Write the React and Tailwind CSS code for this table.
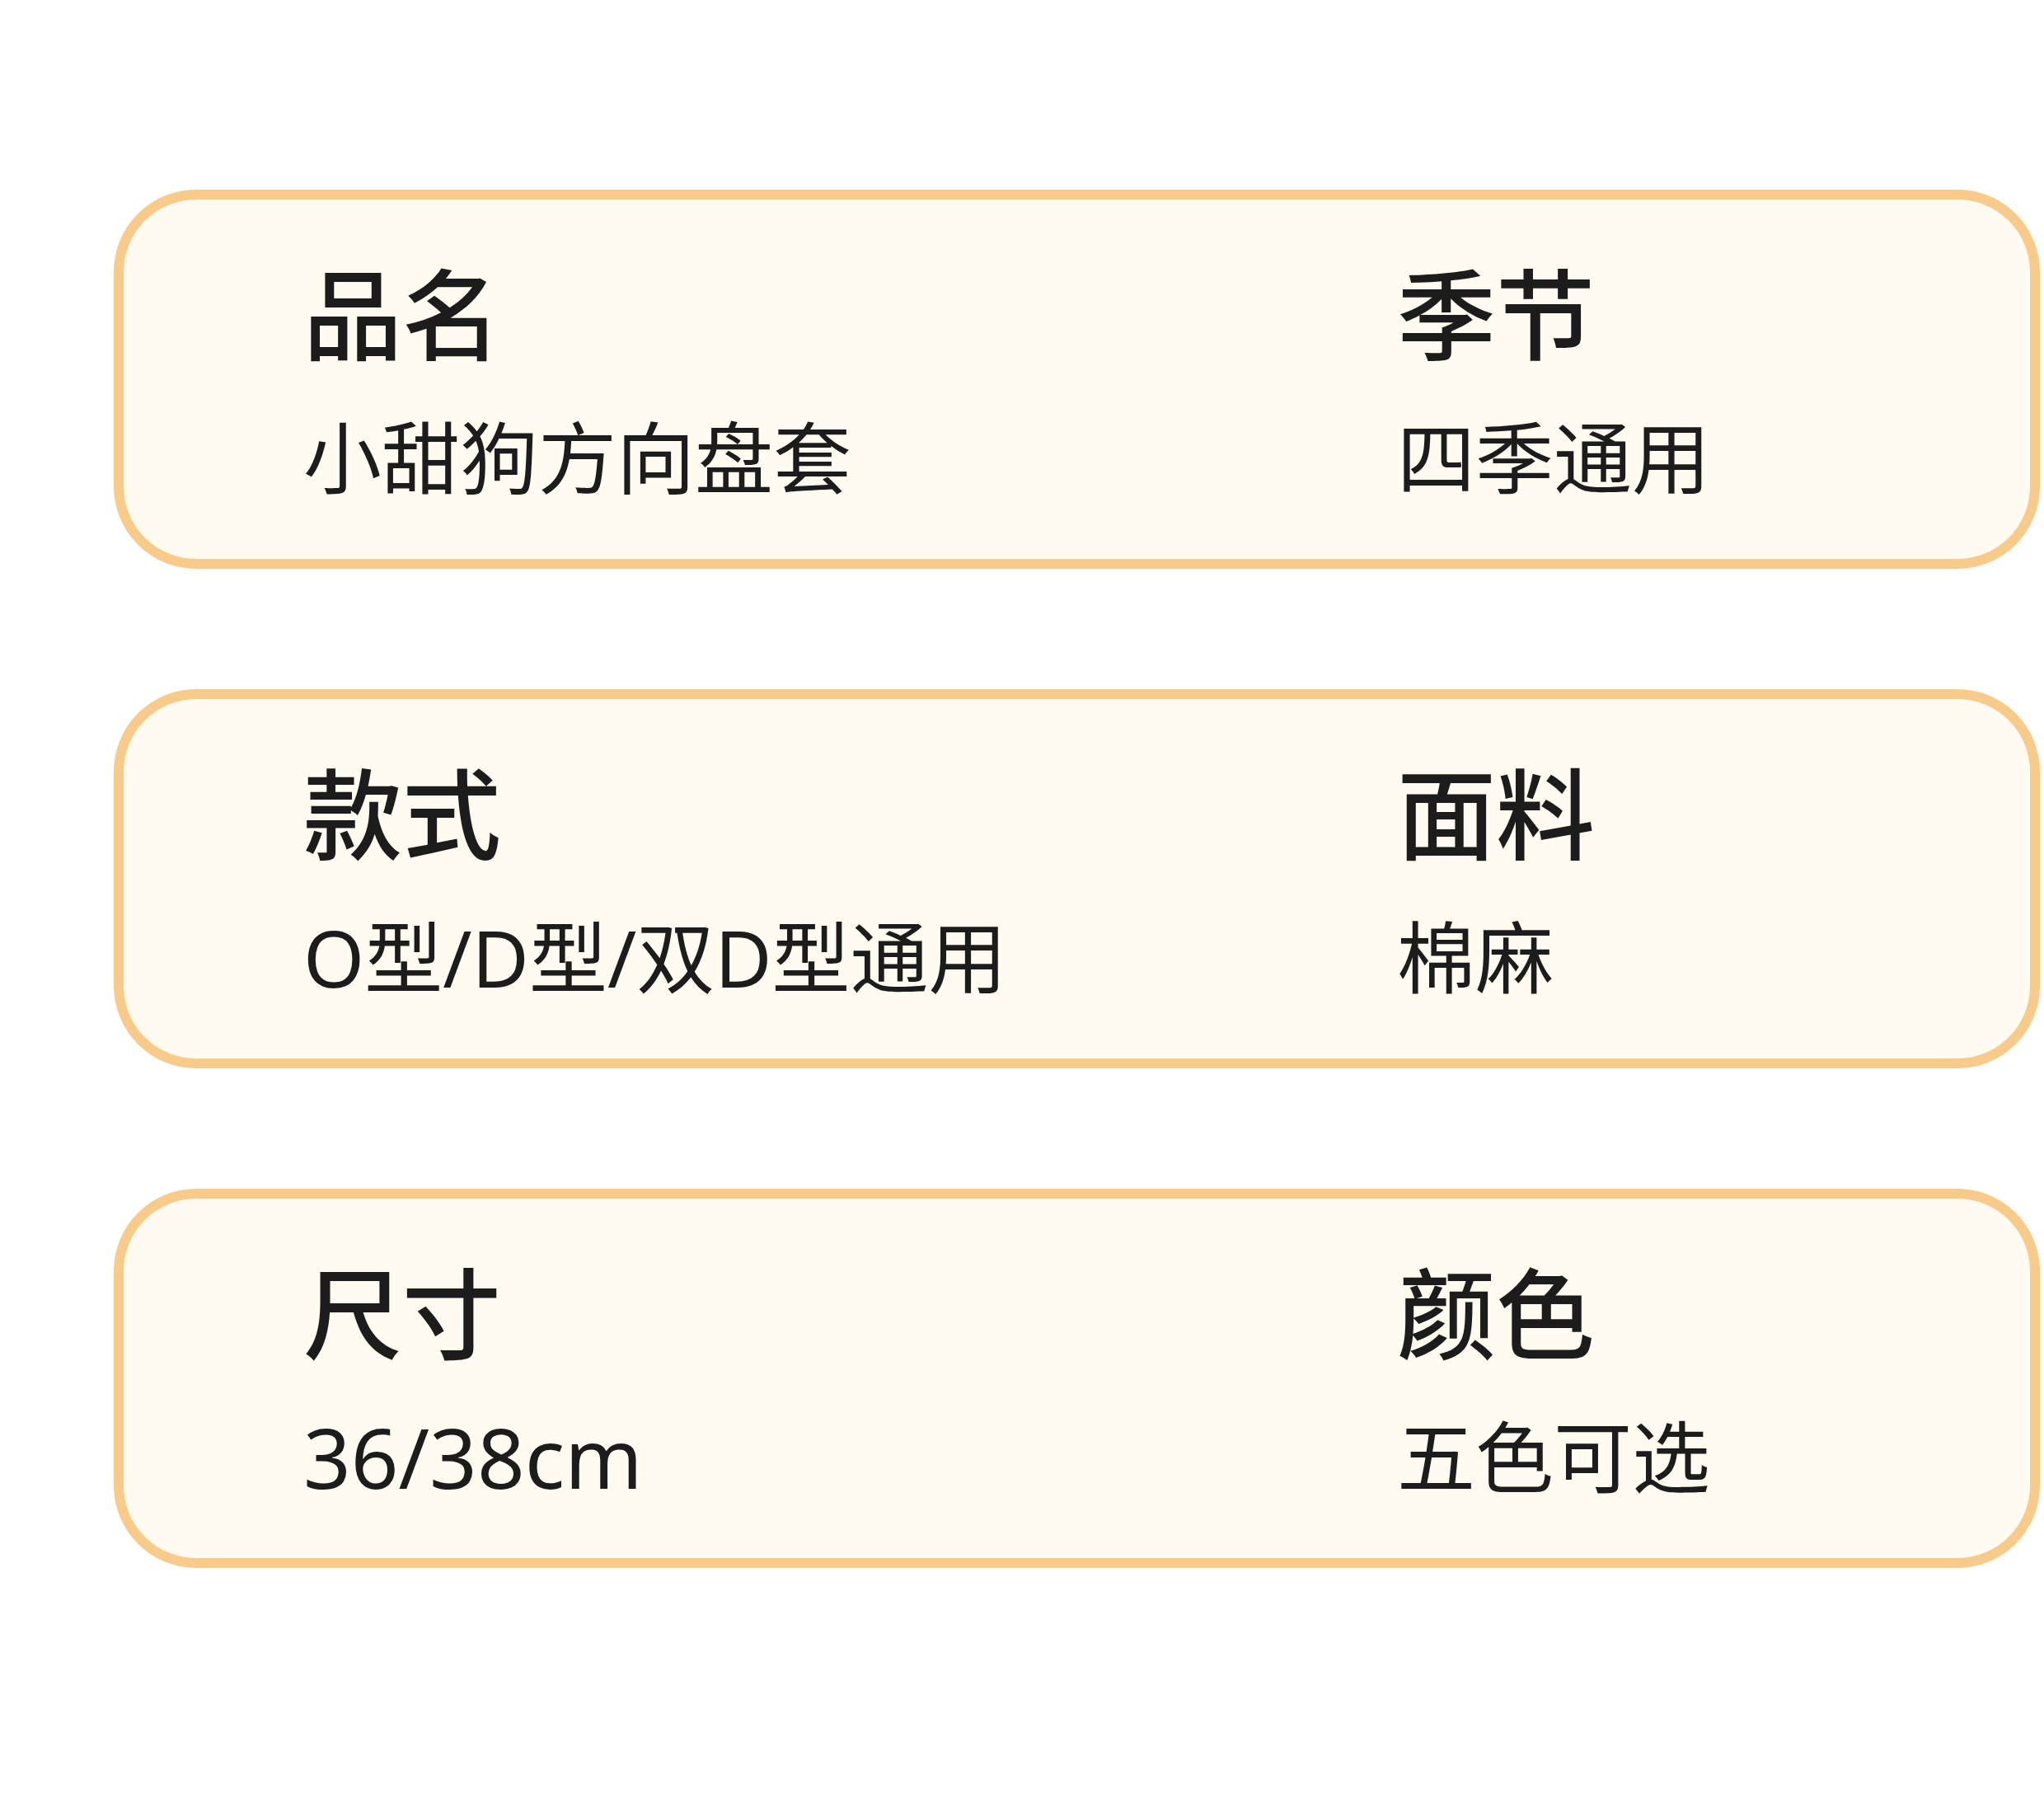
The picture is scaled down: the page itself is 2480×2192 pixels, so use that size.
import React from "react";

const rows = [
  [
    { label: "品名", value: "小甜狗方向盘套" },
    { label: "季节", value: "四季通用" },
  ],
  [
    { label: "款式", value: "O型/D型/双D型通用" },
    { label: "面料", value: "棉麻" },
  ],
  [
    { label: "尺寸", value: "36/38cm", wide: true },
    { label: "颜色", value: "五色可选" },
  ],
];

const font = { fontFamily: '"Noto Sans", "Noto Sans CJK SC", sans-serif' };

const Spec = ({ label, value, wide }) => (
  <div className="flex flex-col">
    <div className="mt-[4px] text-[120px] leading-none font-medium text-[#1c1c1c]">{label}</div>
    <div
      className={
        wide
          ? "mt-[66px] text-[101px] leading-[95px] text-[#1c1c1c]"
          : "mt-[66px] text-[95px] leading-none text-[#1c1c1c]"
      }
    >
      {value}
    </div>
  </div>
);

const App = () => {
  return (
    <div className="min-h-[2192px] w-[2480px] bg-white pl-[138px] pr-[5px] pt-[230px]" style={font}>
      <div className="flex flex-col gap-[146px]">
        {rows.map((row, i) => (
          <div
            key={i}
            className="flex h-[460px] items-center rounded-[100px] border-[12px] border-[#F8CB8B] bg-[#FFFBF1] pl-[218px]"
          >
            <div className="grid w-full grid-cols-[1327px_1fr]">
              {row.map((item) => (
                <Spec key={item.label} {...item} />
              ))}
            </div>
          </div>
        ))}
      </div>
    </div>
  );
};

export default App;
